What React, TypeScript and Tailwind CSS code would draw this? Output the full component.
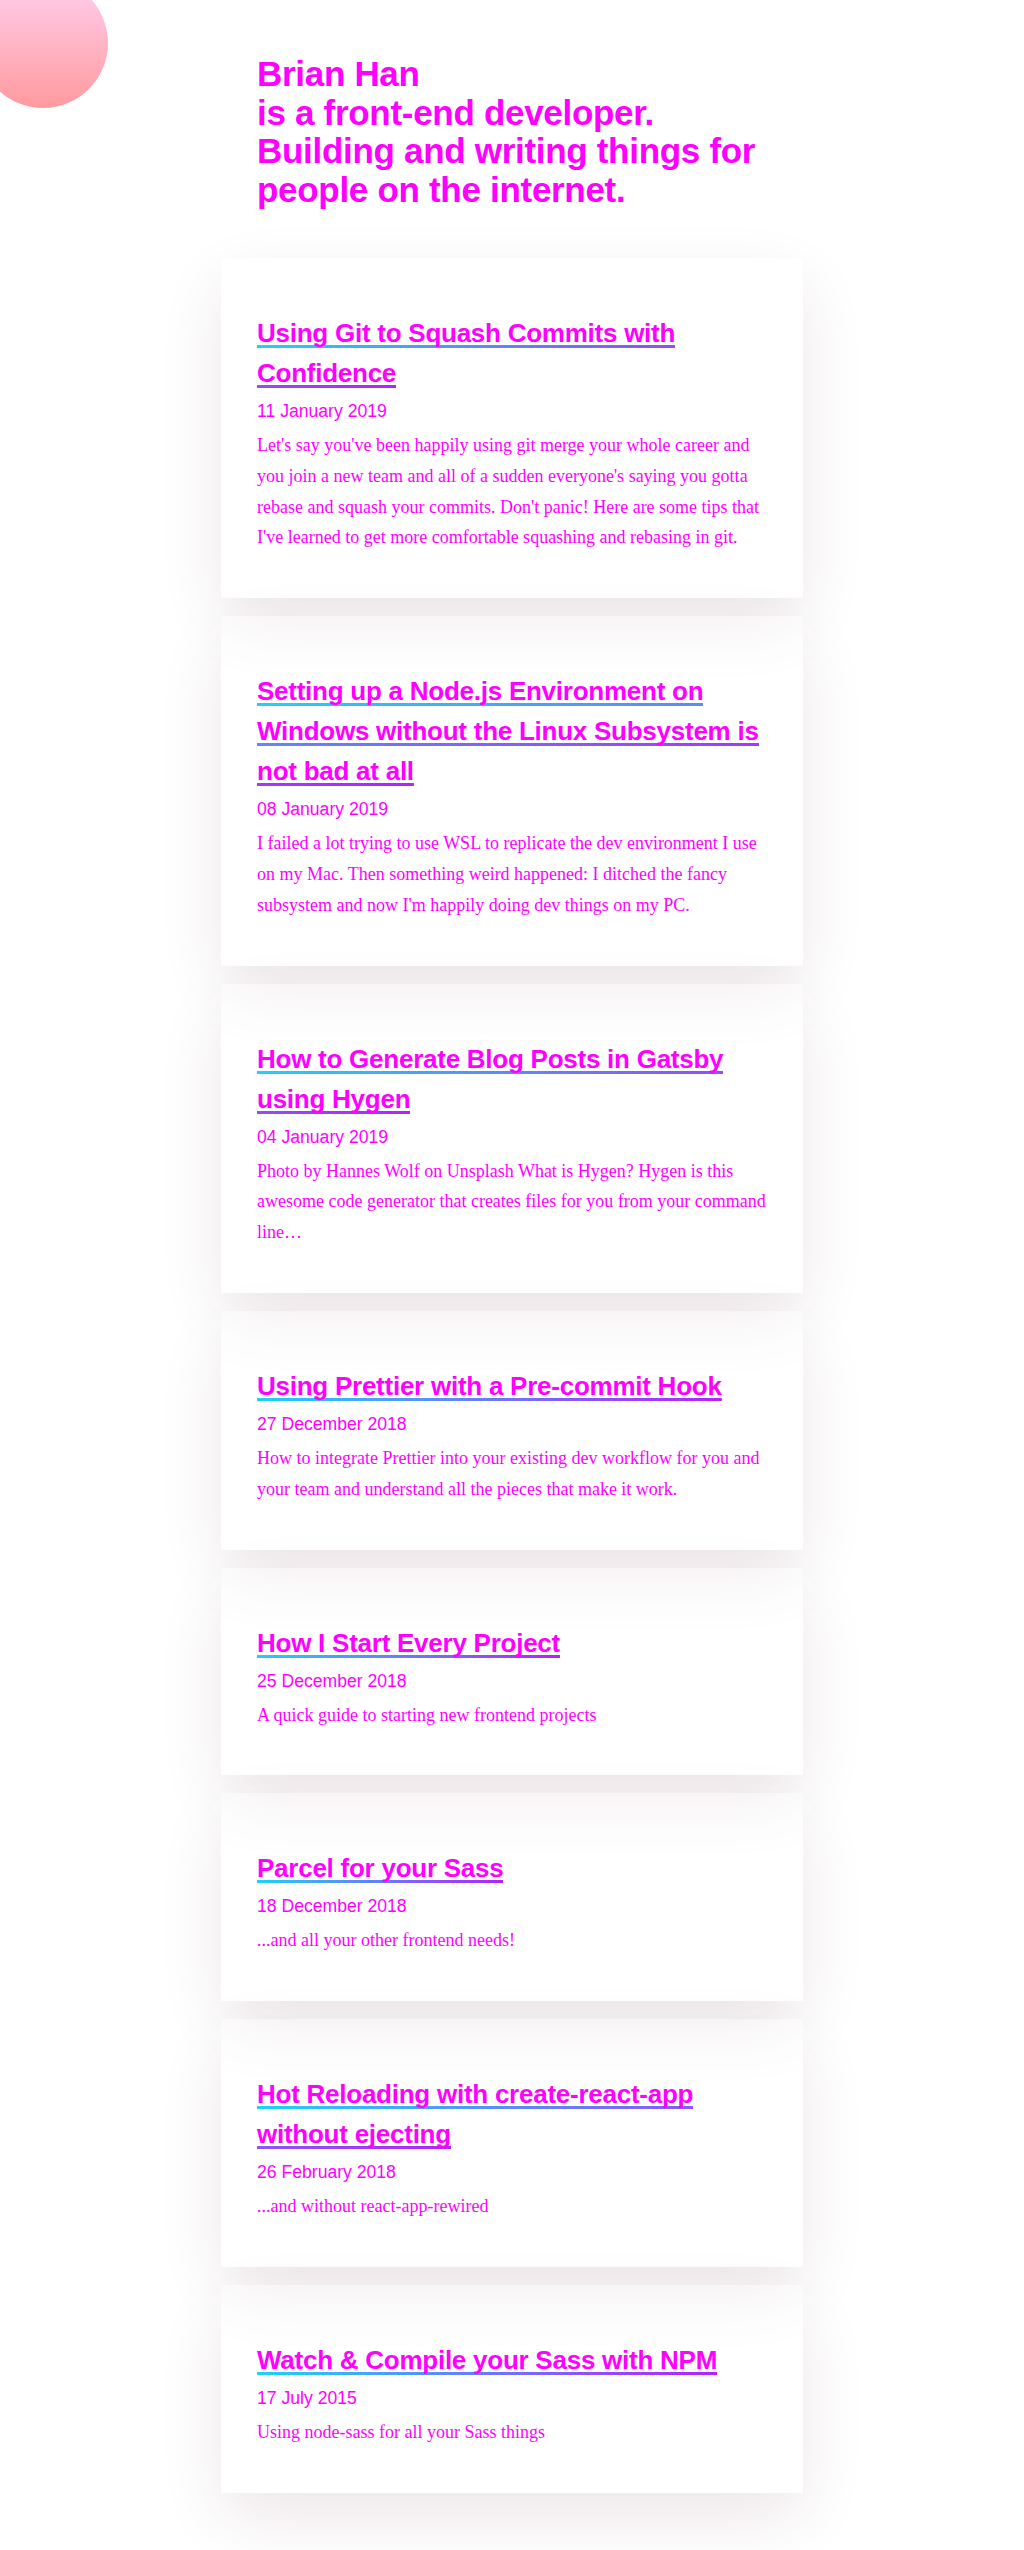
import React from "react";

type Post = { title: string; date: string; excerpt: string };

const posts: Post[] = [
  {
    title: "Using Git to Squash Commits with Confidence",
    date: "11 January 2019",
    excerpt:
      "Let's say you've been happily using git merge your whole career and you join a new team and all of a sudden everyone's saying you gotta rebase and squash your commits. Don't panic! Here are some tips that I've learned to get more comfortable squashing and rebasing in git.",
  },
  {
    title: "Setting up a Node.js Environment on Windows without the Linux Subsystem is not bad at all",
    date: "08 January 2019",
    excerpt:
      "I failed a lot trying to use WSL to replicate the dev environment I use on my Mac. Then something weird happened: I ditched the fancy subsystem and now I'm happily doing dev things on my PC.",
  },
  {
    title: "How to Generate Blog Posts in Gatsby using Hygen",
    date: "04 January 2019",
    excerpt:
      "Photo by Hannes Wolf on Unsplash What is Hygen? Hygen is this awesome code generator that creates files for you from your command line…",
  },
  {
    title: "Using Prettier with a Pre-commit Hook",
    date: "27 December 2018",
    excerpt:
      "How to integrate Prettier into your existing dev workflow for you and your team and understand all the pieces that make it work.",
  },
  {
    title: "How I Start Every Project",
    date: "25 December 2018",
    excerpt: "A quick guide to starting new frontend projects",
  },
  {
    title: "Parcel for your Sass",
    date: "18 December 2018",
    excerpt: "...and all your other frontend needs!",
  },
  {
    title: "Hot Reloading with create-react-app without ejecting",
    date: "26 February 2018",
    excerpt: "...and without react-app-rewired",
  },
  {
    title: "Watch & Compile your Sass with NPM",
    date: "17 July 2015",
    excerpt: "Using node-sass for all your Sass things",
  },
];

function Card({ post }: { post: Post }) {
  return (
    <article className="bg-white/30 shadow-[0_24px_64px_-6px_rgba(80,15,37,0.12)] px-[36px] pt-[55px] pb-[45px]">
      <h2 className="m-0 text-[26px] leading-[40px] font-bold tracking-[-0.25px] font-['Liberation_Sans',Arial,sans-serif] text-[#ff00ff]">
        <a
          href="#"
          className="text-[#ff00ff] no-underline bg-[linear-gradient(to_right,#1fd1f9,#b621fe)] bg-no-repeat bg-bottom bg-[length:100%_3px] bg-size-[100%_3px]"
        >
          {post.title}
        </a>
      </h2>
      <div className="mt-[5px] text-[17.6px] leading-[26px] font-['Liberation_Sans',Arial,sans-serif] text-[#ff00ff]">
        {post.date}
      </div>
      <p className="mt-[6px] m-0 text-[18px] leading-[30.8px] font-['Liberation_Serif','Times_New_Roman',serif] text-[#ff00ff]">
        {post.excerpt}
      </p>
    </article>
  );
}

export default function App() {
  return (
    <div className="relative min-h-[2550px] bg-white overflow-hidden">
      <div className="absolute left-[-22px] top-[-22px] w-[130px] h-[130px] rounded-full bg-linear-to-t from-[#ff9a9e] to-[#fecfef]" />
      <div className="w-[582px] mx-auto pt-[55px] pb-[56px]">
        <header className="px-[36px] mb-[49px]">
          <h1 className="m-0 text-[35px] leading-[38.5px] font-bold tracking-[-0.3px] font-['Liberation_Sans',Arial,sans-serif] text-[#ff00ff]">
            Brian Han
            <br />
            is a front-end developer. Building and writing things for people on the internet.
          </h1>
        </header>
        <main className="flex flex-col gap-[18px]">
          {posts.map((p) => (
            <Card key={p.title} post={p} />
          ))}
        </main>
      </div>
    </div>
  );
}
